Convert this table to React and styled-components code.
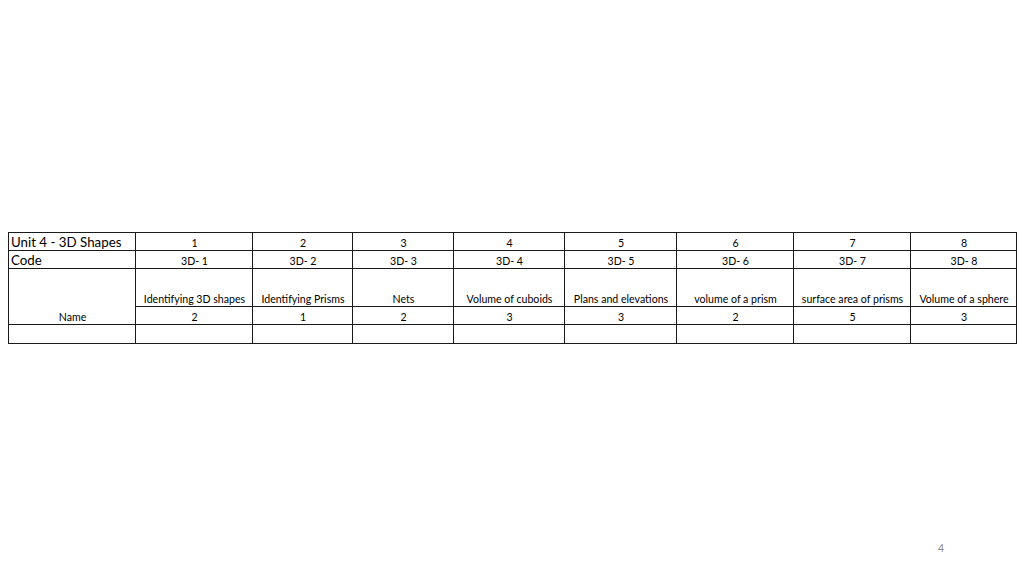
import React from 'react'
import styled, { createGlobalStyle } from 'styled-components'

const GlobalStyle = createGlobalStyle`
    html, body {
        margin: 0;
        padding: 0;
        background: #ffffff;
    }
`

const Page = styled.div`
    width: 1024px;
    height: 576px;
    box-sizing: border-box;
    padding: 232px 8px 0 8px;
    display: flex;
    flex-direction: column;
    font-family: Lato, "Open Sans", sans-serif;
    color: #000;
    overflow: hidden;
`

const Sheet = styled.table`
    width: 1008px;
    table-layout: fixed;
    border-collapse: collapse;
    border: 1px solid #1a1a1a;
`

const Cell = styled.td`
    border: 1px solid #1a1a1a;
    height: ${props => props.h}px;
    padding: 0 1px 0 2px;
    box-sizing: border-box;
    font-size: ${props => props.big ? '13.3px' : '10.6px'};
    text-align: ${props => props.big ? 'left' : 'center'};
    vertical-align: bottom;
    white-space: nowrap;
    overflow: hidden;
    line-height: ${props => props.big ? '15px' : '13px'};
`

const Footer = styled.div`
    margin-top: auto;
    display: flex;
    justify-content: flex-end;
    padding: 0 72px 22px 0;
    font-size: 10.5px;
    color: #8c8c8c;
`

const widths = [127, 117, 100, 101, 111, 112, 117, 117, 106]

const topics = [
    { n: 1, code: '3D- 1', name: 'Identifying 3D shapes', score: 2 },
    { n: 2, code: '3D- 2', name: 'Identifying Prisms', score: 1 },
    { n: 3, code: '3D- 3', name: 'Nets', score: 2 },
    { n: 4, code: '3D- 4', name: 'Volume of cuboids', score: 3 },
    { n: 5, code: '3D- 5', name: 'Plans and elevations', score: 3 },
    { n: 6, code: '3D- 6', name: 'volume of a prism', score: 2 },
    { n: 7, code: '3D- 7', name: 'surface area of prisms', score: 5 },
    { n: 8, code: '3D- 8', name: 'Volume of a sphere', score: 3 },
]

export default function App() {
    return (
        <Page>
            <GlobalStyle />
            <Sheet>
                <colgroup>
                    {widths.map((w, i) => <col key={i} style={{ width: w }} />)}
                </colgroup>
                <tbody>
                    <tr>
                        <Cell big h={18}>Unit 4 - 3D Shapes</Cell>
                        {topics.map(t => <Cell key={t.n} h={18}>{t.n}</Cell>)}
                    </tr>
                    <tr>
                        <Cell big h={18}>Code</Cell>
                        {topics.map(t => <Cell key={t.n} h={18}>{t.code}</Cell>)}
                    </tr>
                    <tr>
                        <Cell rowSpan={2} h={56}>Name</Cell>
                        {topics.map(t => <Cell key={t.n} h={38}>{t.name}</Cell>)}
                    </tr>
                    <tr>
                        {topics.map(t => <Cell key={t.n} h={18}>{t.score}</Cell>)}
                    </tr>
                    <tr>
                        <Cell h={19}></Cell>
                        {topics.map(t => <Cell key={t.n} h={19}></Cell>)}
                    </tr>
                </tbody>
            </Sheet>
            <Footer>4</Footer>
        </Page>
    )
}
